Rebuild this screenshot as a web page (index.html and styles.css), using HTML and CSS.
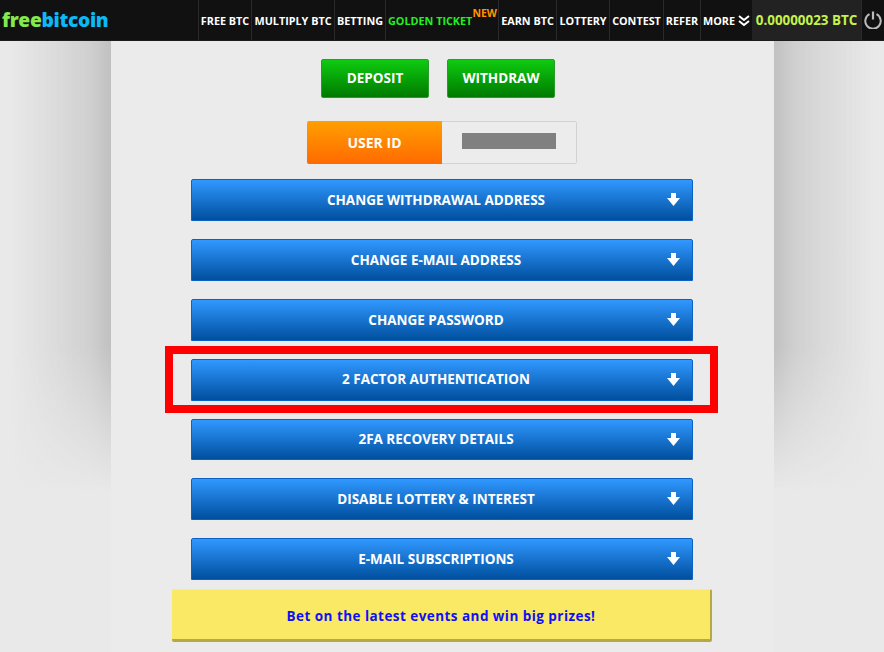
FILE: index.html
```html
<!DOCTYPE html>
<html lang="en">
<head>
<meta charset="utf-8">
<title>freebitcoin</title>
<link rel="stylesheet" href="styles.css">
</head>
<body>
<nav class="topbar">
  <a class="logo"><span class="logo-free">free</span><span class="logo-bit">bitcoin</span></a>
  <ul class="menu">
    <li class="menu-item w-free">FREE BTC</li>
    <li class="menu-item w-multi">MULTIPLY BTC</li>
    <li class="menu-item w-bet">BETTING</li>
    <li class="menu-item w-gold golden">GOLDEN TICKET<span class="new">NEW</span></li>
    <li class="menu-item w-earn">EARN BTC</li>
    <li class="menu-item w-lot">LOTTERY</li>
    <li class="menu-item w-con">CONTEST</li>
    <li class="menu-item w-ref">REFER</li>
    <li class="menu-item w-more">MORE
      <svg class="chev" width="12" height="11" viewBox="0 0 12 11"><path d="M1 1l5 4 5-4M1 6l5 4 5-4" fill="none" stroke="#fff" stroke-width="2"/></svg>
    </li>
    <li class="balance">0.00000023 BTC</li>
    <li class="power">
      <svg width="18" height="18" viewBox="0 0 18 18"><path d="M5.5 3.2a7.7 7.7 0 1 0 7 0" fill="none" stroke="#bbb" stroke-width="2"/><path d="M9 0.5v8" fill="none" stroke="#bbb" stroke-width="2.2"/></svg>
    </li>
  </ul>
</nav>
<div class="stage">
  <main class="content">
    <div class="actions">
      <a class="btn-green">DEPOSIT</a>
      <a class="btn-green">WITHDRAW</a>
    </div>
    <div class="user-id">
      <div class="user-label">USER ID</div>
      <div class="user-value"><span class="redacted"></span></div>
    </div>
    <div class="panels">
      <div class="panel">CHANGE WITHDRAWAL ADDRESS<svg class="arrow" viewBox="0 0 13 13"><path d="M4 0h5v5h4l-6.5 8L0 5h4z" fill="#fff"/></svg></div>
      <div class="panel">CHANGE E-MAIL ADDRESS<svg class="arrow" viewBox="0 0 13 13"><path d="M4 0h5v5h4l-6.5 8L0 5h4z" fill="#fff"/></svg></div>
      <div class="panel">CHANGE PASSWORD<svg class="arrow" viewBox="0 0 13 13"><path d="M4 0h5v5h4l-6.5 8L0 5h4z" fill="#fff"/></svg></div>
      <div class="panel">2 FACTOR AUTHENTICATION<svg class="arrow" viewBox="0 0 13 13"><path d="M4 0h5v5h4l-6.5 8L0 5h4z" fill="#fff"/></svg><span class="highlight"></span></div>
      <div class="panel">2FA RECOVERY DETAILS<svg class="arrow" viewBox="0 0 13 13"><path d="M4 0h5v5h4l-6.5 8L0 5h4z" fill="#fff"/></svg></div>
      <div class="panel">DISABLE LOTTERY &amp; INTEREST<svg class="arrow" viewBox="0 0 13 13"><path d="M4 0h5v5h4l-6.5 8L0 5h4z" fill="#fff"/></svg></div>
      <div class="panel">E-MAIL SUBSCRIPTIONS<svg class="arrow" viewBox="0 0 13 13"><path d="M4 0h5v5h4l-6.5 8L0 5h4z" fill="#fff"/></svg></div>
    </div>
    <div class="banner">Bet on the latest events and win big prizes!</div>
  </main>
</div>
</body>
</html>
```
FILE: styles.css
```css
* { box-sizing: border-box; }
html, body { margin: 0; padding: 0; height: 100%; overflow: hidden; }
body { background: #e9e9e9; font-family: "Open Sans", "Liberation Sans", sans-serif; }

.topbar {
  height: 41px;
  background: #111;
  border-bottom: 1px solid #1c1c1c;
  display: flex;
  justify-content: space-between;
  align-items: stretch;
}
.logo {
  padding-left: 2px;
  font-family: "Open Sans", sans-serif;
  font-weight: 800;
  font-size: 19.2px;
  line-height: 39px;
  letter-spacing: -0.3px;
}
.logo-free { color: #84e84e; }
.logo-bit { color: #0cb8f5; }

.menu { display: flex; list-style: none; margin: 0; padding: 0; }
.menu-item {
  position: relative;
  display: flex;
  align-items: center;
  justify-content: center;
  gap: 3px;
  border-left: 1px solid #2a2a2a;
  color: #fff;
  font-size: 10.8px;
  font-weight: 700;
  white-space: nowrap;
}
.w-free { width: 53px; }
.w-multi { width: 83px; }
.w-bet { width: 51px; }
.w-gold { width: 113px; justify-content: flex-start; padding-left: 2px; }
.w-earn { width: 58px; }
.w-lot { width: 53px; }
.w-con { width: 54px; }
.w-ref { width: 37px; }
.w-more { width: 52px; border-left: 1px solid #2a2a2a; }
.golden { color: #22f022; }
.new {
  position: absolute;
  top: 7px;
  right: 1px;
  color: #ff9500;
  font-size: 10.5px;
  line-height: 12px;
}
.balance {
  width: 109px;
  background: #222;
  color: #c4f24a;
  font-size: 13.4px;
  font-weight: 700;
  display: flex;
  align-items: center;
  justify-content: center;
  white-space: nowrap;
}
.power {
  width: 23px;
  border-left: 1px solid #2a2a2a;
  display: flex;
  align-items: center;
  justify-content: center;
}

.stage {
  position: relative;
  height: 611px;
  display: flex;
  justify-content: flex-start;
  padding-left: 111px;
}
.stage::before, .stage::after {
  content: "";
  position: absolute;
  top: 0;
  width: 100px;
  height: 450px;
  -webkit-mask-image: linear-gradient(to bottom, #000 0, #000 68%, transparent 100%);
  mask-image: linear-gradient(to bottom, #000 0, #000 68%, transparent 100%);
}
.stage::before { left: 11px; background: linear-gradient(to right, rgba(190,190,190,0), rgba(190,190,190,0.35) 50%, rgba(190,190,190,0.6) 80%, #c0c0c0); }
.stage::after { left: 774px; background: linear-gradient(to left, rgba(190,190,190,0), rgba(190,190,190,0.35) 50%, rgba(190,190,190,0.6) 80%, #c0c0c0); }

.content {
  width: 663px;
  display: flex;
  flex-direction: column;
  align-items: center;
  background: #ebebeb;
  padding: 18px 1px 0 0;
  position: relative;
}
.actions { display: flex; gap: 18px; margin-right: 8px; }
.btn-green {
  width: 108px;
  height: 39px;
  padding-bottom: 2px;
  display: flex;
  align-items: center;
  justify-content: center;
  color: #fff;
  font-size: 13.5px;
  font-weight: 700;
  border: 1px solid #2a9a2a;
  border-radius: 2px;
  background: linear-gradient(to bottom, #0ecb10, #007a00);
}
.user-id {
  margin-top: 23px;
  width: 270px;
  height: 43px;
  display: flex;
  border: 1px solid #d2d2d2;
  border-radius: 2px;
  background: #ececec;
}
.user-label {
  width: 135px;
  margin: -1px 0 -1px -1px;
  display: flex;
  align-items: center;
  justify-content: center;
  color: #fff;
  font-size: 14px;
  font-weight: 700;
  border-radius: 2px 0 0 2px;
  background: linear-gradient(to bottom, #ff9f00, #ff6a00);
}
.user-value { flex: 1; padding: 11px 0 0 20px; }
.redacted { display: block; width: 94px; height: 16px; background: #808080; }

.panels {
  margin-top: 15.45px;
  display: flex;
  flex-direction: column;
  gap: 18px;
}
.panel {
  position: relative;
  width: 502px;
  height: 41.8px;
  display: flex;
  align-items: center;
  justify-content: center;
  padding: 0 12px 0.8px 0;
  color: #fff;
  font-size: 13.5px;
  font-weight: 700;
  border: 1px solid #0c62c4;
  border-radius: 2px 2px 0 0;
  background: linear-gradient(to bottom, #3098ff, #004f9e);
}
.arrow {
  position: absolute;
  right: 12px;
  top: 13px;
  width: 13px;
  height: 13px;
}
.highlight {
  position: absolute;
  left: -27px;
  top: -14px;
  width: 553px;
  height: 67px;
  border: 8px solid #f00;
}
.banner {
  margin-top: 9px;
  width: 540px;
  height: 53px;
  padding-top: 3px;
  display: flex;
  align-items: center;
  justify-content: center;
  color: #1010f8;
  font-size: 13.5px;
  font-weight: 700;
  letter-spacing: 0.45px;
  background: #f9e964;
  border-top: 1px solid #fbee70;
  border-right: 2px solid #b5a845;
  border-bottom: 3px solid #b5a845;
  border-radius: 2px;
}
```
